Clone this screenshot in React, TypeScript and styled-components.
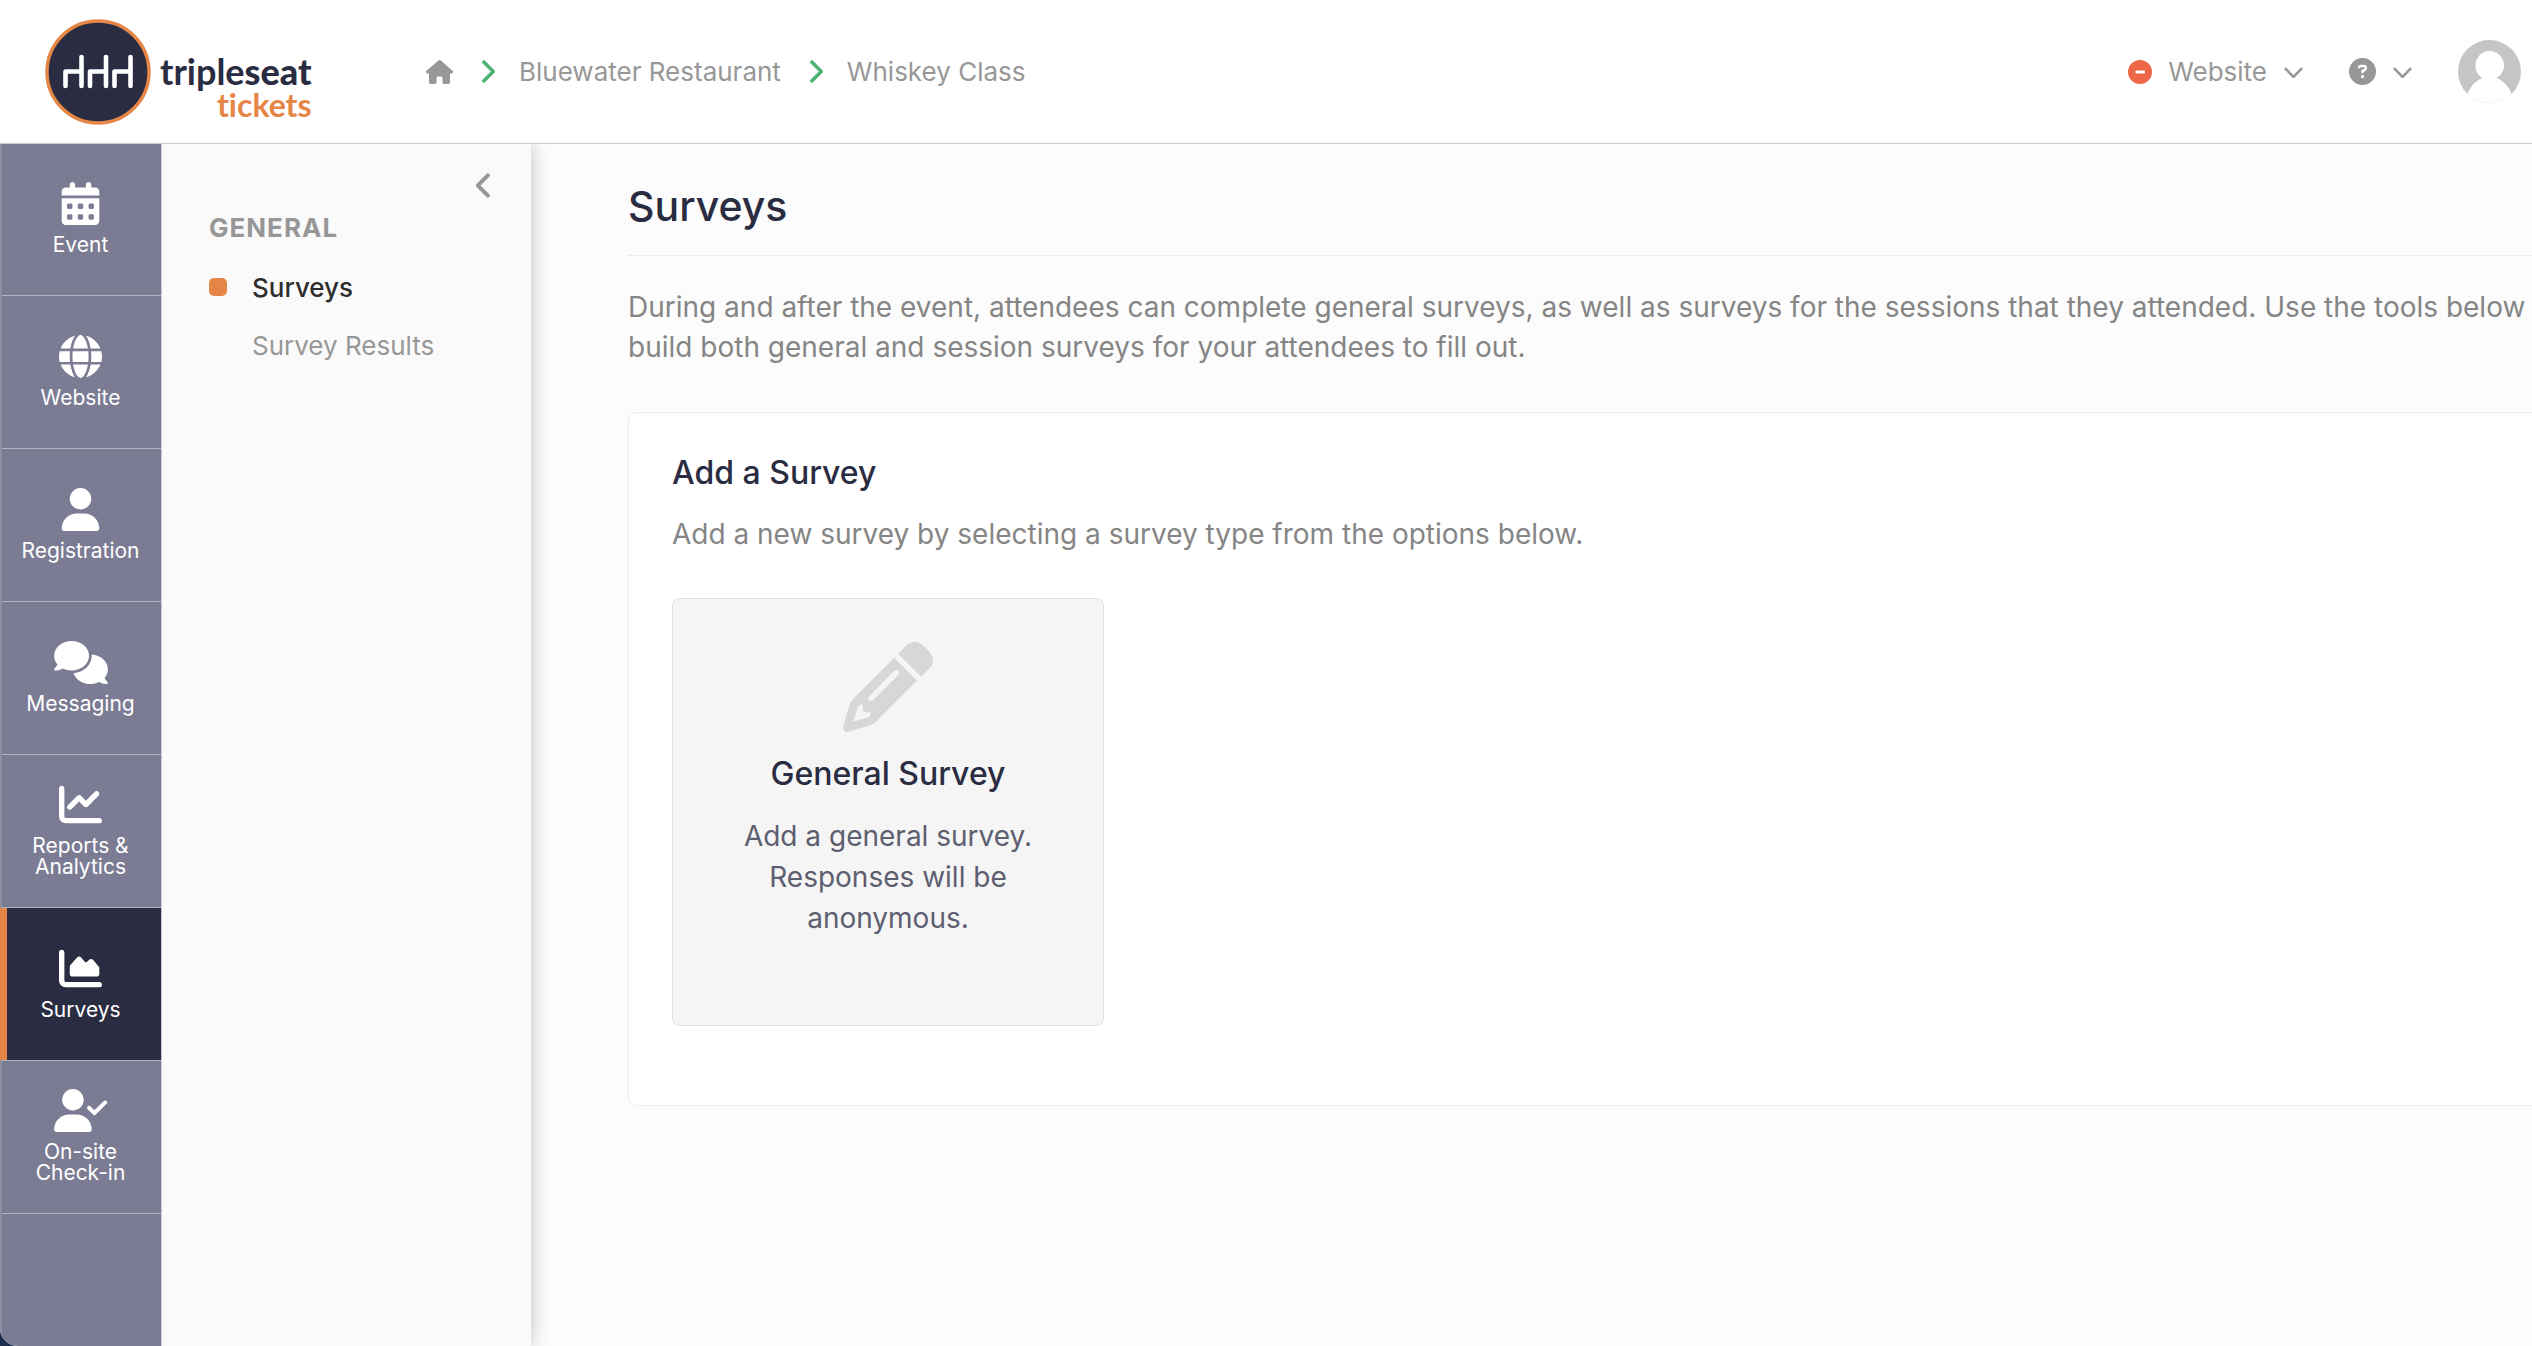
import React from 'react';
import styled, { createGlobalStyle, css } from 'styled-components';
import {
  FaHouse,
  FaChevronRight,
  FaChevronLeft,
  FaChevronDown,
  FaCalendarDays,
  FaGlobe,
  FaUser,
  FaComments,
  FaChartLine,
  FaChartArea,
  FaUserCheck,
  FaPencil,
  FaCircleQuestion,
} from 'react-icons/fa6';

const color = {
  navy: '#2a2c41',
  slate: '#7b7c93',
  orange: '#e58647',
  green: '#4db272',
  red: '#ee6749',
  muted: '#979797',
  text: '#858585',
  page: '#fcfcfc',
};

const GlobalStyle = createGlobalStyle`
  *, *::before, *::after { box-sizing: border-box; }
  body {
    margin: 0;
    background: #1d2f4d;
    font-family: Inter, "Noto Sans", sans-serif;
    font-size: 28px;
    color: ${color.text};
  }
  h1, h2, h3, p, ul, ol { margin: 0; padding: 0; }
  ul, ol { list-style: none; }
  a { color: inherit; text-decoration: none; }
  button { font: inherit; color: inherit; border: 0; padding: 0; background: none; cursor: pointer; }
  svg { display: block; flex: none; }
`;

const Shell = styled.div`
  display: flex;
  flex-direction: column;
  min-height: 100vh;
  overflow: hidden;
  border-bottom-left-radius: 18px;
  background: ${color.page};
`;

const Header = styled.header`
  display: flex;
  align-items: center;
  height: 144px;
  padding: 0 11px 0 45px;
  border-bottom: 1px solid #cbcbcb;
  background: #fff;
  font-size: 26px;
  color: ${color.muted};
`;

const Logo = styled.a`
  display: flex;
  align-items: center;
  gap: 9px;
  width: 381px;
`;

const Wordmark = styled.span`
  display: flex;
  flex-direction: column;
  align-items: flex-end;
  padding-top: 32px;
  font-family: Lato, sans-serif;
  font-size: 36px;
  line-height: 34px;
  font-weight: 700;
  font-variant-ligatures: none;
  color: ${color.navy};

  strong { font-weight: 900; }
`;

const Tickets = styled.span`
  font-size: 32px;
  color: ${color.orange};
`;

const Crumbs = styled.ol`
  display: flex;
  align-items: center;
  flex: 1;

  li { display: flex; align-items: center; }
`;

const HomeIcon = styled(FaHouse)`
  width: 27px;
  height: 24px;
`;

const CrumbArrow = styled(FaChevronRight)`
  width: 16px;
  height: 25px;
  margin: 0 24px 0 26px;
  color: ${color.green};
  stroke: currentColor;
  stroke-width: 12px;
`;

const HeaderTools = styled.div`
  display: flex;
  align-items: center;
`;

const ToolButton = styled.button`
  display: flex;
  align-items: center;
  gap: 16px;
  margin-right: 45px;
`;

const NavRail = styled.nav`
  flex: none;
  width: 162px;
  border-left: 2px solid #8e8fa3;
  border-right: 1px solid #c9c9d2;
  background: ${color.slate};
`;

const RailItem = styled.li`
  height: 153px;
  border-bottom: 1px solid #b4b5c2;

  &:first-child { height: 152px; }
`;

const RailLink = styled.a<{ $active?: boolean; $wide?: boolean }>`
  display: flex;
  flex-direction: column;
  align-items: center;
  justify-content: center;
  gap: 9px;
  height: 100%;
  padding: 0 2px 2px 0;
  font-size: 21px;
  line-height: 21px;
  text-align: center;
  color: #fff;

  svg {
    width: ${({ $wide }) => ($wide ? 54 : 43)}px;
    height: 43px;
  }

  ${({ $active }) =>
    $active &&
    css`
      margin-left: -2px;
      padding-right: 7px;
      border-left: 7px solid ${color.orange};
      background: ${color.navy};
    `}
`;

const RailLabel = styled.span`
  max-width: 130px;
`;

const Body = styled.div`
  display: flex;
  flex: 1;
`;

const SidePanel = styled.aside`
  z-index: 1;
  flex: none;
  display: flex;
  flex-direction: column;
  width: 369px;
  padding: 28px 38px 0 47px;
  background: #fafafa;
  box-shadow: 2px 0 16px rgba(0, 0, 0, 0.2);
  clip-path: inset(0 -30px 0 0);
  font-size: 26px;
`;

const Collapse = styled.button`
  align-self: flex-end;
  color: ${color.muted};

  svg {
    width: 17px;
    height: 27px;
    stroke: currentColor;
    stroke-width: 16px;
  }
`;

const PanelTitle = styled.h2`
  margin: 13px 0 14px;
  font-size: 26px;
  line-height: 32px;
  font-weight: 700;
  letter-spacing: 1px;
  color: ${color.muted};
`;

const PanelLink = styled.a<{ $active?: boolean }>`
  display: flex;
  align-items: center;
  gap: 25px;
  height: 58px;
  color: ${({ $active }) => ($active ? '#2d2d2d' : color.muted)};
  font-weight: ${({ $active }) => ($active ? 500 : 400)};

  &::before {
    content: '';
    width: 18px;
    height: 18px;
    border-radius: 5px;
    background: ${({ $active }) => ($active ? color.orange : 'transparent')};
  }
`;

const Main = styled.main`
  flex: 1;
  min-width: 0;
  overflow: hidden;
  padding: 34px 0 60px 97px;
`;

const Content = styled.div`
  width: calc(100% + 68px);
`;

const PageTitle = styled.h1`
  padding-bottom: 21px;
  border-bottom: 1px solid #ececec;
  font-size: 41px;
  line-height: 56px;
  font-weight: 500;
  color: ${color.navy};
`;

const Intro = styled.p`
  margin-top: 31px;
  line-height: 40px;
`;

const Card = styled.section`
  margin-top: 45px;
  padding: 40px 43px 79px;
  border: 1px solid #eee;
  border-radius: 8px;
  background: #fff;
`;

const Heading = styled.h2`
  font-size: 32px;
  line-height: 40px;
  font-weight: 500;
  color: ${color.navy};
`;

const CardText = styled.p`
  margin: 21px 0 44px;
  line-height: 40px;
`;

const Tile = styled.button`
  display: flex;
  flex-direction: column;
  align-items: center;
  width: 432px;
  height: 428px;
  padding: 43px 60px 0;
  border: 1px solid #e0e0e0;
  border-radius: 7px;
  background: #f5f5f5;
  color: #d7d7d9;
`;

const TileTitle = styled(Heading).attrs({ as: 'span' })`
  margin: 22px 0;
`;

const TileText = styled.span`
  line-height: 41px;
  color: #5d5e70;
`;

const LogoMark = () => (
  <svg width="106" height="106" viewBox="0 0 106 106" aria-hidden="true">
    <circle cx="53" cy="53" r="51" fill={color.navy} stroke={color.orange} strokeWidth="3.4" />
    <path
      d="M20.500 67V52.500H36.500M36.500 38V67M45 67V52.500H61M61 38V67M69.500 67V52.500H85.500M85.500 38V67"
      fill="none"
      stroke="#fff"
      strokeWidth="4.600"
      strokeLinecap="round"
      strokeLinejoin="round"
    />
  </svg>
);

const StatusOff = () => (
  <svg width="24" height="24" viewBox="0 0 24 24" aria-hidden="true">
    <circle cx="12" cy="12" r="12" fill={color.red} />
    <rect x="7.500" y="10.500" width="9.500" height="3" rx="1" fill="#fff" />
  </svg>
);

const Avatar = () => (
  <svg width="63" height="63" viewBox="0 0 63 63" role="img" aria-label="Account">
    <clipPath id="avatar-clip">
      <circle cx="31.500" cy="31.500" r="31.500" />
    </clipPath>
    <g clipPath="url(#avatar-clip)">
      <rect width="63" height="63" fill="#c5c5c5" />
      <path
        fill="#fff"
        d="M31.500 11C23.500 11 17.500 17.500 17.500 25.500C17.500 31 20 35.500 24.500 38C17 41 12 47 9.500 54V63H53.500V54C51 47 46 41 38.500 38C43 35.500 46 31 46 25.500C46 17.500 39.500 11 31.500 11Z"
      />
    </g>
  </svg>
);

const railItems = [
  { label: 'Event', Icon: FaCalendarDays },
  { label: 'Website', Icon: FaGlobe },
  { label: 'Registration', Icon: FaUser },
  { label: 'Messaging', Icon: FaComments, wide: true },
  { label: 'Reports & Analytics', Icon: FaChartLine },
  { label: 'Surveys', Icon: FaChartArea, active: true },
  { label: 'On-site Check-in', Icon: FaUserCheck, wide: true },
];

export default function App() {
  return (
    <>
      <GlobalStyle />
      <Shell>
        <Header>
          <Logo href="#">
            <LogoMark />
            <Wordmark>
              <span>
                triple<strong>seat</strong>
              </span>
              <Tickets>tickets</Tickets>
            </Wordmark>
          </Logo>
          <Crumbs>
            <li>
              <a href="#" aria-label="Home">
                <HomeIcon />
              </a>
            </li>
            <li>
              <CrumbArrow />
              <a href="#">Bluewater Restaurant</a>
            </li>
            <li>
              <CrumbArrow />
              <a href="#">Whiskey Class</a>
            </li>
          </Crumbs>
          <HeaderTools>
            <ToolButton type="button">
              <StatusOff />
              Website
              <FaChevronDown size={21} />
            </ToolButton>
            <ToolButton type="button" aria-label="Help">
              <FaCircleQuestion size={27} />
              <FaChevronDown size={21} />
            </ToolButton>
            <Avatar />
          </HeaderTools>
        </Header>
        <Body>
          <NavRail>
            <ul>
              {railItems.map(({ label, Icon, active, wide }) => (
                <RailItem key={label}>
                  <RailLink href="#" $active={active} $wide={wide}>
                    <Icon />
                    <RailLabel>{label}</RailLabel>
                  </RailLink>
                </RailItem>
              ))}
            </ul>
          </NavRail>
          <SidePanel>
            <Collapse type="button" aria-label="Collapse panel">
              <FaChevronLeft />
            </Collapse>
            <PanelTitle>GENERAL</PanelTitle>
            <PanelLink href="#" $active>
              Surveys
            </PanelLink>
            <PanelLink href="#">Survey Results</PanelLink>
          </SidePanel>
          <Main>
            <Content>
              <PageTitle>Surveys</PageTitle>
              <Intro>
                During and after the event, attendees can complete general surveys, as well as
                surveys for the sessions that they attended. Use the tools below to build both
                general and session surveys for your attendees to fill out.
              </Intro>
              <Card>
                <Heading>Add a Survey</Heading>
                <CardText>Add a new survey by selecting a survey type from the options below.</CardText>
                <Tile type="button">
                  <FaPencil size={90} />
                  <TileTitle>General Survey</TileTitle>
                  <TileText>Add a general survey. Responses will be anonymous.</TileText>
                </Tile>
              </Card>
            </Content>
          </Main>
        </Body>
      </Shell>
    </>
  );
}
